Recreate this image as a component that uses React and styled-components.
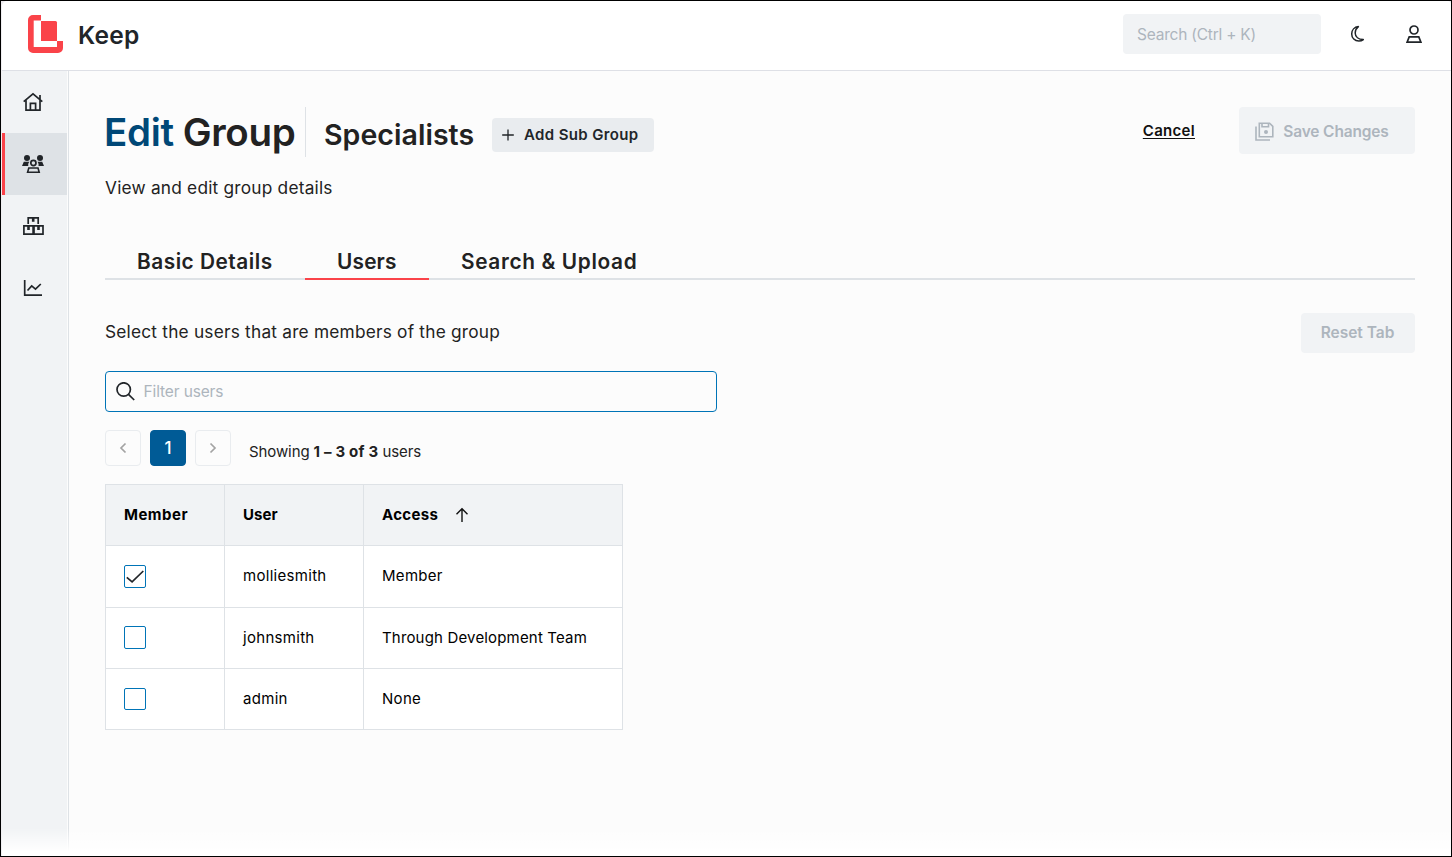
import React, { useState } from 'react';
import styled, { createGlobalStyle } from 'styled-components';

const GlobalStyle = createGlobalStyle`
  * {
    box-sizing: border-box;
  }

  body {
    margin: 0;
    background: #fff;
    color: #212529;
    font-family: Inter, 'Open Sans', sans-serif;
  }

  button, input {
    font-family: inherit;
  }

  svg {
    display: block;
    flex-shrink: 0;
  }
`;

const Frame = styled.div`
  width: 1452px;
  height: 857px;
  border: 1px solid #000;
  background: #eceaee;
  overflow: hidden;
`;

const Shell = styled.div`
  position: relative;
  display: flex;
  flex-direction: column;
  height: 100%;
  background: #fcfcfc;
  border-left: 1px solid #f0eff2;
  border-radius: 6px 4px 0 0;
  overflow: hidden;
`;

const Header = styled.header`
  display: flex;
  align-items: center;
  height: 70px;
  padding: 0 28px 3px 26px;
  background: #fff;
  border-bottom: 1px solid #dee0e6;
`;

const Brand = styled.div`
  margin-left: 15px;
  padding-top: 1px;
  flex: 1;
  font-size: 24.5px;
  font-weight: 600;
  letter-spacing: 0.26px;
`;

const SearchBox = styled.input`
  width: 198px;
  height: 40px;
  padding: 0 14px;
  border: none;
  border-radius: 4px;
  background: #f1f3f5;
  font-size: 15.5px;
  letter-spacing: -0.22px;

  &::placeholder {
    color: #adb5bd;
    opacity: 1;
  }
`;

const HeaderIcon = styled.div`
  margin-left: ${(props) => props.$gap}px;
`;

const Body = styled.div`
  display: flex;
  flex: 1;
`;

const Sidebar = styled.nav`
  width: 67px;
  padding-right: 1px;
  border-right: 1px solid #dee2e6;
  background: linear-gradient(to right, #f1f3f5 65px, #fcfcfc 65px);
`;

const SideItem = styled.div`
  display: flex;
  align-items: center;
  justify-content: center;
  height: 62px;
  padding-right: 3px;
  background: ${(props) => (props.$active ? '#dee2e6' : 'transparent')};
  box-shadow: ${(props) => (props.$active ? 'inset 3px 0 0 #fa4349' : 'none')};
`;

const Main = styled.main`
  flex: 1;
  padding: 36px 36px 0;
  color: #222;
`;

const TitleRow = styled.div`
  display: flex;
  align-items: flex-start;
  height: 50px;
`;

const Title = styled.h1`
  display: flex;
  gap: 9px;
  margin: 0 0 0 -1px;
  height: 50px;
  width: 202px;
  border-right: 1px solid #dee2e6;
  font-size: 38.5px;
  font-weight: 600;
  line-height: 50px;
  letter-spacing: -0.32px;
  white-space: nowrap;
`;

const TitleAccent = styled.span`
  color: #004877;
`;

const GroupName = styled.h2`
  margin: 5px 0 0 18px;
  width: 150px;
  font-size: 28.5px;
  font-weight: 600;
  line-height: 45px;
  letter-spacing: 0.05px;
  white-space: nowrap;
`;

const AddButton = styled.button`
  display: flex;
  align-items: center;
  gap: 10px;
  width: 162px;
  height: 34px;
  margin: 11px auto 0 18px;
  padding: 0 0 1px 10px;
  border: none;
  border-radius: 4px;
  background: #e9ecef;
  color: #212529;
  font-size: 15px;
  font-weight: 600;
  letter-spacing: 0.36px;
  white-space: nowrap;
`;

const Cancel = styled.a`
  margin: 12px 44px 0 0;
  color: #111;
  font-size: 15px;
  font-weight: 600;
  line-height: 24px;
  letter-spacing: 0.3px;
  text-decoration: underline;
  text-underline-offset: 2px;
`;

const DisabledButton = styled.button`
  display: flex;
  align-items: center;
  justify-content: center;
  gap: 9px;
  width: ${(props) => props.$width}px;
  height: ${(props) => props.$height}px;
  padding: ${(props) => (props.$icon ? '1px 10px 0 0' : '0 1px 1px 0')};
  border: none;
  border-radius: 4px;
  background: #f1f3f5;
  color: #adb5bd;
  font-size: 15.5px;
  font-weight: 600;
  letter-spacing: ${(props) => props.$spacing}px;
`;

const Lead = styled.p`
  margin: ${(props) => props.$top}px 0 0;
  font-size: 17.3px;
  line-height: 26px;
  letter-spacing: 0.21px;
`;

const Tabs = styled.div`
  display: flex;
  height: 35px;
  margin-top: 44px;
  box-shadow: inset 0 -2px 0 #dee2e6;
`;

const Tab = styled.div`
  width: ${(props) => props.$width}px;
  padding-left: 32px;
  border-bottom: 2px solid ${(props) => (props.$active ? '#fa4349' : 'transparent')};
  font-size: 20.8px;
  font-weight: 600;
  line-height: 33px;
  letter-spacing: ${(props) => props.$spacing}px;
  white-space: nowrap;
`;

const TabIntro = styled.div`
  display: flex;
  justify-content: space-between;
  margin-top: 33px;
`;

const Filter = styled.label`
  display: flex;
  align-items: center;
  gap: 9px;
  width: 612px;
  height: 41px;
  margin-top: 18px;
  padding-left: 9.5px;
  border: 1px solid #0074b7;
  border-radius: 4px;
`;

const FilterInput = styled.input`
  flex: 1;
  padding: 0;
  border: none;
  outline: none;
  background: transparent;
  font-size: 15.5px;
  letter-spacing: -0.13px;

  &::placeholder {
    color: #adb5bd;
    opacity: 1;
  }
`;

const Pagination = styled.div`
  display: flex;
  gap: 9px;
  margin-top: 18px;
`;

const PageButton = styled.button`
  display: flex;
  align-items: center;
  justify-content: center;
  width: 36px;
  height: 36px;
  padding: 0;
  border: 1px solid ${(props) => (props.$active ? '#005b96' : '#e9ecef')};
  border-radius: 4px;
  background: ${(props) => (props.$active ? '#005b96' : 'transparent')};
  color: ${(props) => (props.$active ? '#fff' : '#a3a3a3')};
  font-size: 17px;
  font-weight: 500;
`;

const Showing = styled.div`
  padding: 7px 0 0 9px;
  font-size: 15px;
  line-height: 29px;
  letter-spacing: -0.1px;

  b {
    letter-spacing: 0.2px;
  }
`;

const Table = styled.div`
  display: grid;
  grid-template-columns: 119px 139px 259px;
  grid-template-rows: 61px 62px 61px 62px;
  width: 518px;
  margin-top: 18px;
  border-left: 1px solid #dee2e6;
  color: #000;
`;

const Cell = styled.div`
  display: flex;
  align-items: center;
  padding-left: 18px;
  padding-bottom: ${(props) => props.$lift ?? 2}px;
  margin-left: -1px;
  border: 1px solid #dee2e6;
  border-bottom: ${(props) => (props.$last ? '1px solid #dee2e6' : 'none')};
  background: #fff;
  font-size: 15px;
  letter-spacing: ${(props) => props.$spacing ?? 0.3}px;
`;

const HeadCell = styled(Cell)`
  background: #f1f3f5;
  font-weight: 700;

  svg {
    margin: 2px 0 0 17px;
  }
`;

const CheckBox = styled.div`
  display: flex;
  align-items: center;
  justify-content: center;
  width: 22px;
  height: ${(props) => props.$height}px;
  border: 1px solid #0074b7;
  border-radius: 2px;
`;

const BottomFade = styled.div`
  position: absolute;
  left: 0;
  right: 0;
  bottom: 0;
  height: 28px;
  background: linear-gradient(to bottom, rgba(255, 255, 255, 0), #fff 85%);
`;

const Logo = () => (
  <svg width="35" height="38" viewBox="0 0 35 38" fill="#fa4349">
    <path d="M13 0v5.5H5.7V32H29v-6h6v7a5 5 0 0 1-5 5H5a5 5 0 0 1-5-5V5a5 5 0 0 1 5-5z" />
    <path d="M13 6h14.5A1.5 1.5 0 0 1 29 7.500V26H13z" />
  </svg>
);

const MoonIcon = () => (
  <svg width="16" height="18" viewBox="0 0 16 18" fill="none" stroke="#212529" strokeWidth="1.500" strokeLinejoin="round">
    <path d="M8.400 1.600C4.400 2 1.700 4.900 1.700 8.900c0 4.200 3.100 7.200 7.100 7.200 1.700 0 3.300-.5 4.500-1.500C8.700 14.400 5.200 11.900 5.200 7.900c0-2.500 1.300-4.800 3.200-6.300z" />
  </svg>
);

const UserIcon = () => (
  <svg width="18" height="20" viewBox="0 0 18 20" fill="none" stroke="#212529" strokeWidth="1.700">
    <circle cx="9" cy="6" r="4" />
    <path d="M4.200 12.900h9.600l2.100 5.300H2.100z" />
  </svg>
);

const HomeIcon = () => (
  <svg width="20" height="20" viewBox="0 0 20 20" fill="none" stroke="#212529" strokeWidth="1.700">
    <path d="M.7 9.700L10 1.900l9.300 7.800M17 8V2.900M3 8.200v10h14v-10M7.400 18V11.300h5.200V18" />
  </svg>
);

const GroupIcon = () => (
  <svg width="22" height="20" viewBox="0 0 22 20" fill="#212529">
    <circle cx="5" cy="4" r="3" />
    <circle cx="18" cy="4" r="3" />
    <path d="M1.800 7.800h5.700C6.200 9 6 10.500 6.300 12H0zM15.500 7.800h4.700L22 12h-5.500c.3-1.600 0-3-1-4.200z" />
    <circle cx="11.400" cy="9" r="2.600" fill="none" stroke="#212529" strokeWidth="1.700" />
    <path d="M6.800 14h9.200l1.200 4.200H5.600z" fill="none" stroke="#212529" strokeWidth="1.600" />
  </svg>
);

const BoxesIcon = () => (
  <svg width="21" height="20" viewBox="0 0 21 20" fill="none" stroke="#212529" strokeWidth="1.700">
    <path d="M5.200 8V1.900h10V8M.9 9.800h9.200v8.400H.9zM11 9.800h9v8.400h-9z" />
    <path d="M10.200 2v3.800M5.500 10v4M15.500 10v4" strokeWidth="2.600" />
  </svg>
);

const ChartIcon = () => (
  <svg width="20" height="20" viewBox="0 0 20 20" fill="none" stroke="#212529" strokeWidth="1.700">
    <path d="M1.700 2v15.200H19M4.500 12.500l4.200-4.600 3.800 3.300L17.800 6" />
  </svg>
);

const PlusIcon = () => (
  <svg width="12" height="12" viewBox="0 0 12 12" fill="none" stroke="#212529" strokeWidth="1.300">
    <path d="M6 .5v11M.2 6h11.600" />
  </svg>
);

const SaveIcon = () => (
  <svg width="19" height="19" viewBox="0 0 19 19" fill="none" stroke="#adb5bd" strokeWidth="1.600">
    <path d="M4.300 1.200h10.300l3.200 3.200v10.400H4.300z" />
    <path d="M7 1.200v3.600h6.500V1.200M1 4.500V18h14" />
    <circle cx="11" cy="10" r="2" fill="#adb5bd" stroke="none" />
  </svg>
);

const SearchIcon = () => (
  <svg width="19" height="19" viewBox="0 0 19 19" fill="none" stroke="#212529" strokeWidth="1.700">
    <circle cx="7.700" cy="7.500" r="6.700" />
    <path d="M12.500 12.300l5.700 5.700" />
  </svg>
);

const Chevron = ({ d }) => (
  <svg width="12" height="12" viewBox="0 0 12 12" fill="none" stroke="#a3a3a3" strokeWidth="1.700">
    <path d={d} />
  </svg>
);

const SortIcon = () => (
  <svg width="14" height="16" viewBox="0 0 14 16" fill="none" stroke="#111" strokeWidth="1.400">
    <path d="M7 15V1.800M1.500 7.200L7 1.700l5.500 5.500" />
  </svg>
);

const CheckIcon = () => (
  <svg width="20" height="20" viewBox="0 0 20 20" fill="none" stroke="#212529" strokeWidth="1.700">
    <path d="M1.800 10.300l5.300 4.500L18.300 4" />
  </svg>
);

const tabs = [
  { label: 'Basic Details', width: 200, spacing: 0.52 },
  { label: 'Users', width: 124, spacing: 0.2 },
  { label: 'Search & Upload', width: 240, spacing: 0.66 },
];

const users = [
  { name: 'molliesmith', access: 'Member', member: true, box: 23, lift: 0 },
  { name: 'johnsmith', access: 'Through Development Team', spacing: 0.17, member: false, box: 23, lift: 1 },
  { name: 'admin', access: 'None', member: false, box: 22, lift: 0 },
];

function App() {
  const [activeTab, setActiveTab] = useState('Users');
  const [filter, setFilter] = useState('');

  return (
    <>
      <GlobalStyle />
      <Frame>
        <Shell>
          <Header>
            <Logo />
            <Brand>Keep</Brand>
            <SearchBox placeholder="Search (Ctrl + K)" />
            <HeaderIcon $gap={29}>
              <MoonIcon />
            </HeaderIcon>
            <HeaderIcon $gap={39}>
              <UserIcon />
            </HeaderIcon>
          </Header>
          <Body>
            <Sidebar>
              <SideItem>
                <HomeIcon />
              </SideItem>
              <SideItem $active>
                <GroupIcon />
              </SideItem>
              <SideItem>
                <BoxesIcon />
              </SideItem>
              <SideItem>
                <ChartIcon />
              </SideItem>
            </Sidebar>
            <Main>
              <TitleRow>
                <Title>
                  <TitleAccent>Edit</TitleAccent>
                  <span>Group</span>
                </Title>
                <GroupName>Specialists</GroupName>
                <AddButton>
                  <PlusIcon />
                  Add Sub Group
                </AddButton>
                <Cancel>Cancel</Cancel>
                <DisabledButton $width={176} $height={47} $spacing={-0.16} $icon disabled>
                  <SaveIcon />
                  Save Changes
                </DisabledButton>
              </TitleRow>
              <Lead $top={18}>View and edit group details</Lead>

              <Tabs>
                {tabs.map((tab) => (
                  <Tab
                    key={tab.label}
                    $width={tab.width}
                    $spacing={tab.spacing}
                    $active={tab.label === activeTab}
                    onClick={() => setActiveTab(tab.label)}
                  >
                    {tab.label}
                  </Tab>
                ))}
              </Tabs>

              <TabIntro>
                <Lead $top={6}>Select the users that are members of the group</Lead>
                <DisabledButton $width={114} $height={40} $spacing={-0.02} disabled>
                  Reset Tab
                </DisabledButton>
              </TabIntro>

              <Filter>
                <SearchIcon />
                <FilterInput
                  placeholder="Filter users"
                  value={filter}
                  onChange={(e) => setFilter(e.target.value)}
                />
              </Filter>

              <Pagination>
                <PageButton>
                  <Chevron d="M8.500 1.500L4 6 8.500 10.500" />
                </PageButton>
                <PageButton $active>1</PageButton>
                <PageButton>
                  <Chevron d="M3.500 1.500L8 6 3.500 10.500" />
                </PageButton>
                <Showing>
                  Showing <b>1 – 3 of 3</b> users
                </Showing>
              </Pagination>

              <Table>
                <HeadCell $spacing={0.48}>Member</HeadCell>
                <HeadCell $spacing={0.1}>User</HeadCell>
                <HeadCell $spacing={0.33}>
                  Access
                  <SortIcon />
                </HeadCell>
                {users.map((user, i) => {
                  const last = i === users.length - 1;
                  return (
                    <React.Fragment key={user.name}>
                      <Cell $last={last} $lift={user.lift}>
                        <CheckBox $height={user.box}>{user.member && <CheckIcon />}</CheckBox>
                      </Cell>
                      <Cell $last={last}>{user.name}</Cell>
                      <Cell $last={last} $spacing={user.spacing}>
                        {user.access}
                      </Cell>
                    </React.Fragment>
                  );
                })}
              </Table>
            </Main>
          </Body>
          <BottomFade />
        </Shell>
      </Frame>
    </>
  );
}

export default App;
